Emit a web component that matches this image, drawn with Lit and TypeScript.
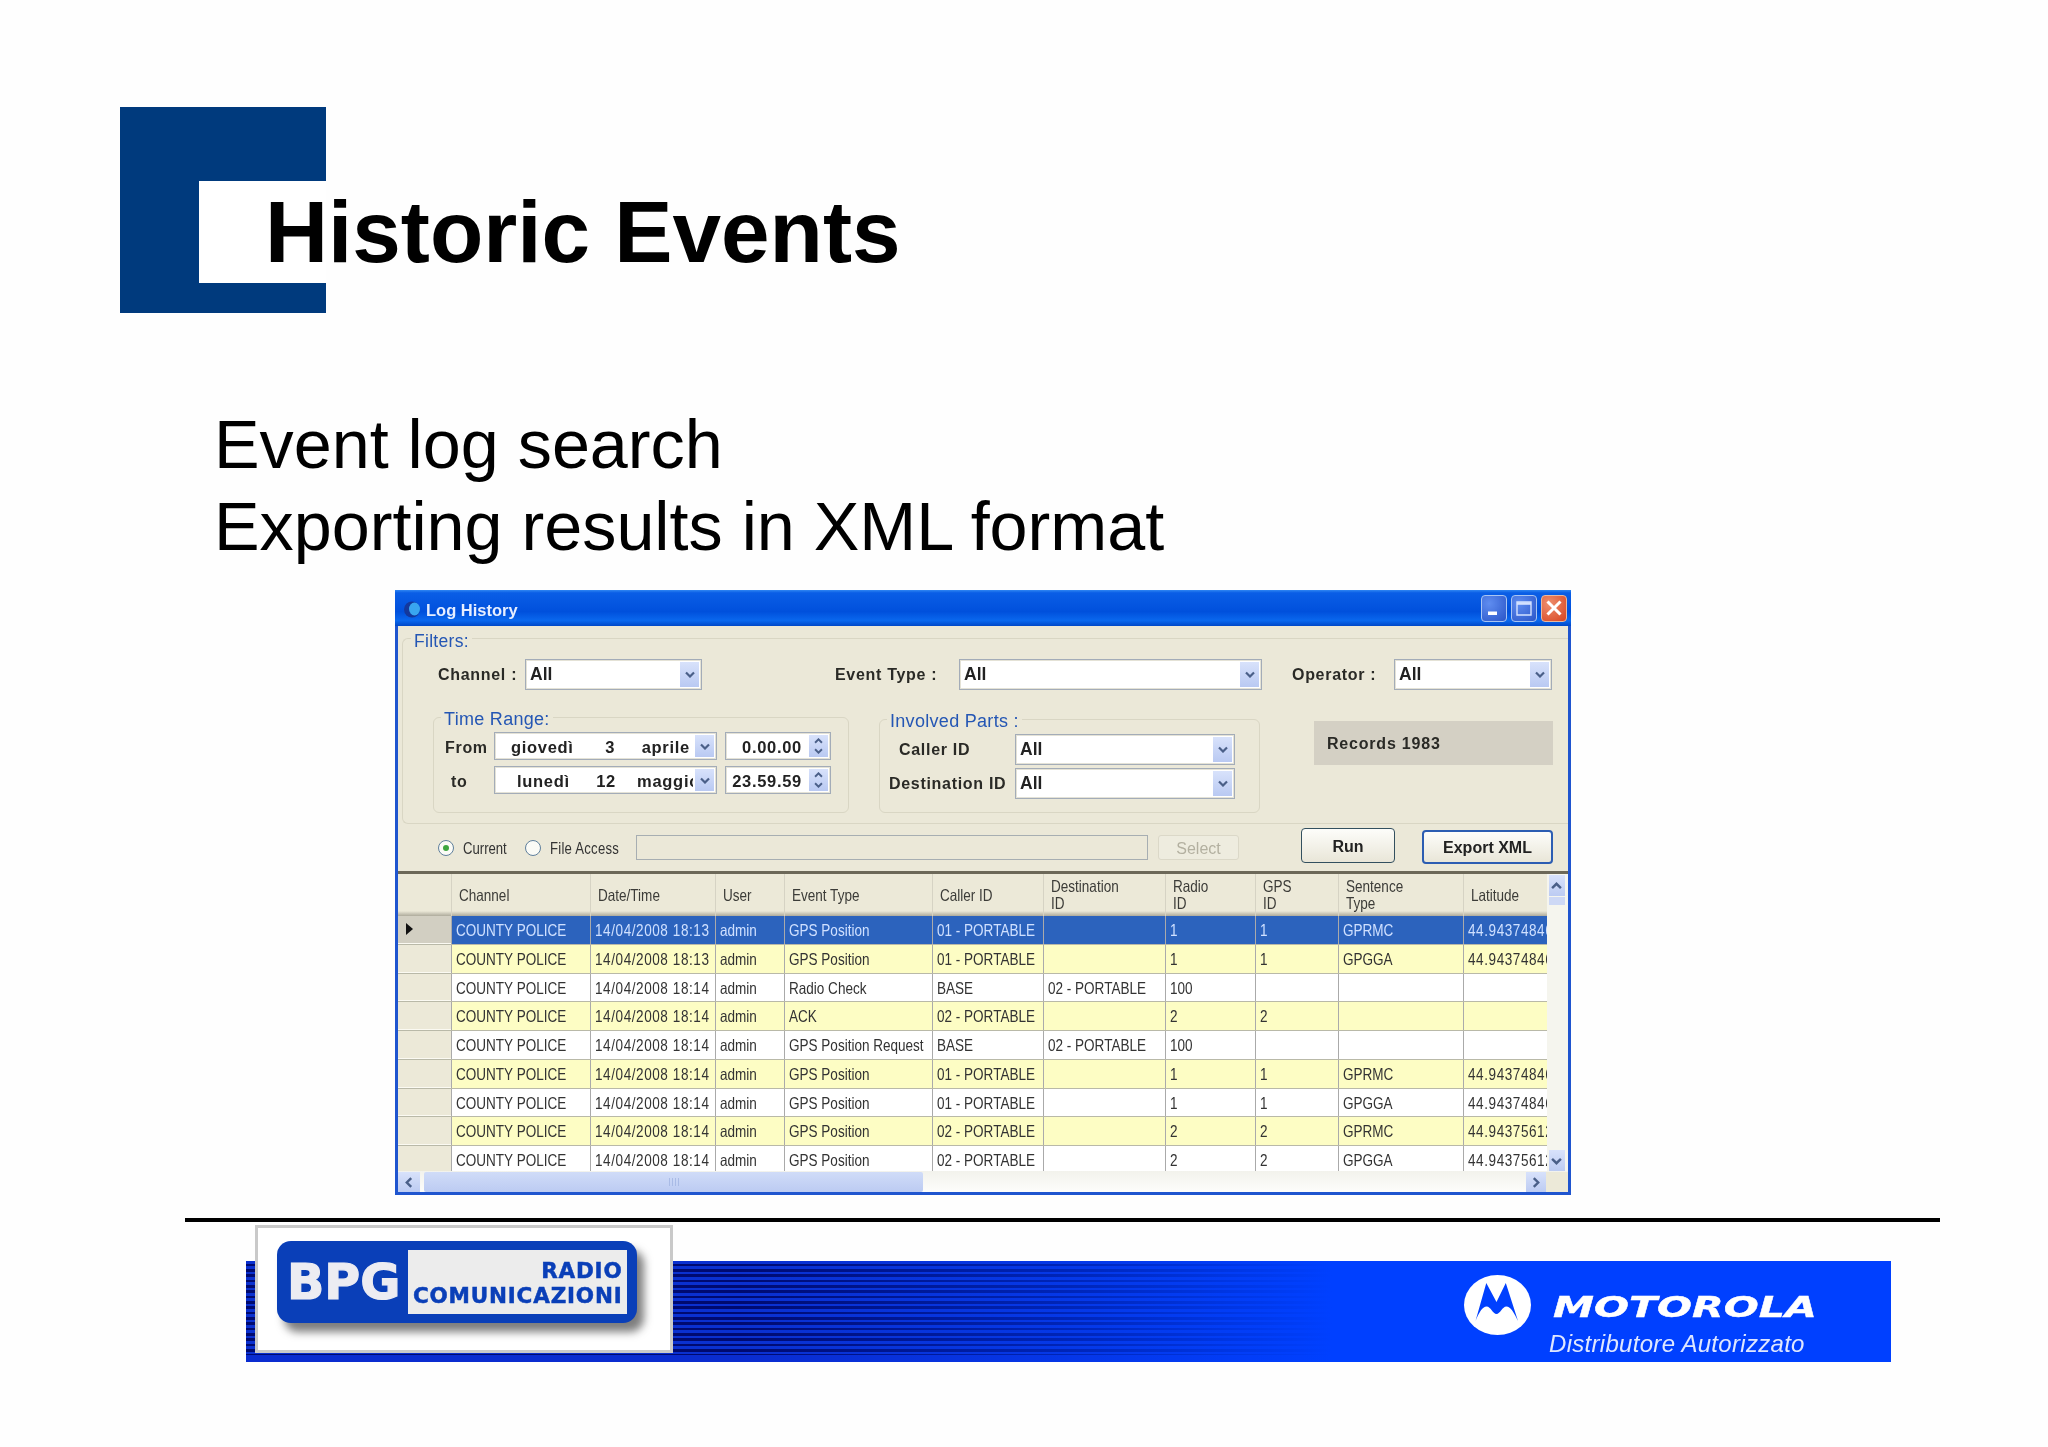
import { LitElement, html, css, svg } from 'lit';
import { customElement } from 'lit/decorators.js';

type Row = { kind: 'sel' | 'yellow' | 'white'; cells: string[] };

const LAT_A = '44.94374846';
const LAT_B = '44.94375612';

const base = (time: string, type: string, caller: string, dest: string, radio: string, gps: string, sentence: string, lat: string) => [
  'COUNTY POLICE', `14/04/2008 ${time}`, 'admin', type, caller, dest, radio, gps, sentence, lat,
];

const ROWS: Row[] = [
  { kind: 'sel', cells: base('18:13', 'GPS Position', '01 - PORTABLE', '', '1', '1', 'GPRMC', LAT_A) },
  { kind: 'yellow', cells: base('18:13', 'GPS Position', '01 - PORTABLE', '', '1', '1', 'GPGGA', LAT_A) },
  { kind: 'white', cells: base('18:14', 'Radio Check', 'BASE', '02 - PORTABLE', '100', '', '', '') },
  { kind: 'yellow', cells: base('18:14', 'ACK', '02 - PORTABLE', '', '2', '2', '', '') },
  { kind: 'white', cells: base('18:14', 'GPS Position Request', 'BASE', '02 - PORTABLE', '100', '', '', '') },
  { kind: 'yellow', cells: base('18:14', 'GPS Position', '01 - PORTABLE', '', '1', '1', 'GPRMC', LAT_A) },
  { kind: 'white', cells: base('18:14', 'GPS Position', '01 - PORTABLE', '', '1', '1', 'GPGGA', LAT_A) },
  { kind: 'yellow', cells: base('18:14', 'GPS Position', '02 - PORTABLE', '', '2', '2', 'GPRMC', LAT_B) },
  { kind: 'white', cells: base('18:14', 'GPS Position', '02 - PORTABLE', '', '2', '2', 'GPGGA', LAT_B) },
];

const HEADERS: string[][] = [
  ['Channel'], ['Date/Time'], ['User'], ['Event Type'], ['Caller ID'],
  ['Destination', 'ID'], ['Radio', 'ID'], ['GPS', 'ID'], ['Sentence', 'Type'], ['Latitude'],
];

// columns with digits run wider than the rest in the reference
const SPACED_COLS = [1, 9];

const chevronDown = svg`<path d="M1 1.5 L5 5.5 L9 1.5" fill="none" stroke="#4a5f88" stroke-width="2.2"/>`;
const chevronUp = svg`<path d="M1 5.5 L5 1.5 L9 5.5" fill="none" stroke="#4a5f88" stroke-width="2.2"/>`;
const chevronLeft = svg`<path d="M5.5 1 L1.5 5 L5.5 9" fill="none" stroke="#4a5f88" stroke-width="2.2"/>`;
const chevronRight = svg`<path d="M1.5 1 L5.5 5 L1.5 9" fill="none" stroke="#4a5f88" stroke-width="2.2"/>`;

@customElement('app-root')
export class AppRoot extends LitElement {
  static styles = css`
    :host {
      display: block;
      width: 2048px;
      height: 1447px;
      padding-top: 107px;
      box-sizing: border-box;
      background: #fefefe;
      overflow: hidden;
      font-family: 'Liberation Sans', Arial, sans-serif;
      color: #000;
    }

    /* slide heading */
    .head {
      display: grid;
      margin-left: 120px;
    }
    .bracket {
      grid-area: 1 / 1;
      width: 206px;
      height: 206px;
      box-sizing: border-box;
      padding: 74px 0 30px 79px;
      background: #003a7d;
    }
    .bracket div {
      height: 100%;
      background: #fff;
    }
    h1 {
      grid-area: 1 / 1;
      z-index: 1;
      margin: 75px 0 0 145px;
      font-size: 87.3px;
      line-height: 100px;
      font-weight: 700;
      white-space: nowrap;
    }
    .lines {
      margin: 90px 0 0 214px;
      font-size: 68.3px;
      line-height: 82px;
    }

    /* log window */
    .window {
      margin: 23px 0 0 395px;
      width: 1176px;
      height: 605px;
      box-sizing: border-box;
      border: solid #1f55cf;
      border-width: 0 3px 3px;
      background: #ebe8d8;
      filter: blur(0.5px);
      display: flex;
      flex-direction: column;
    }
    .titlebar {
      height: 36px;
      margin: 0 -3px;
      padding: 3px 4px 0 9px;
      box-sizing: border-box;
      display: flex;
      align-items: center;
      background: linear-gradient(#2f86f2 0, #0a5ee6 8%, #0050dc 60%, #0a68ee 85%, #0048c8 100%);
      color: #e6eeff;
      font-size: 16.5px;
      line-height: 22px;
      font-weight: 700;
    }
    .titlebar .gem {
      width: 17px;
      height: 17px;
      margin-right: 5px;
    }
    .titlebar .btns {
      margin: -3px 0 0 auto;
      display: flex;
      gap: 4px;
    }
    .wbtn {
      width: 26px;
      height: 27px;
      box-sizing: border-box;
      border: 1.5px solid #a9c5f2;
      border-radius: 4px;
      background: radial-gradient(circle at 30% 30%, #5f8df0, #2a55c8);
      display: flex;
      align-items: center;
      justify-content: center;
    }
    .wbtn.close {
      border-color: #e8b9a0;
      background: radial-gradient(circle at 30% 30%, #ee8f6e, #d8431f);
    }

    .group {
      border: 1px solid #d9d6c4;
      border-radius: 6px;
      box-sizing: border-box;
    }
    .legend {
      width: fit-content;
      height: 22px;
      line-height: 24px;
      margin-top: -11px;
      padding: 0 3px;
      background: #ebe8d8;
      color: #2456b4;
      font-size: 18px;
      letter-spacing: 0.3px;
    }
    .filters {
      margin: 12px 0 0 4px;
      height: 186px;
      border-right: 0;
      border-radius: 6px 0 0 6px;
    }
    .filters > .legend {
      margin-left: 8px;
      line-height: 27px;
      font-size: 17.5px;
    }
    .label {
      font-size: 16px;
      font-weight: 700;
      letter-spacing: 0.7px;
      color: #2a2a26;
      white-space: pre;
    }
    .combo {
      box-sizing: border-box;
      border: 1px solid #a3acb8;
      box-shadow: inset 0 0 0 1px #e4e2d6;
      background: #fff;
      display: flex;
      align-items: center;
      padding-left: 4px;
      height: 31px;
      font-size: 17.5px;
      font-weight: 700;
      color: #222;
      overflow: hidden;
      white-space: pre;
    }
    .combo .val {
      flex: 1;
      min-width: 0;
      overflow: hidden;
    }
    .drop {
      flex: none;
      width: 19px;
      align-self: stretch;
      margin: 2px;
      background: linear-gradient(#d8e2fb, #b9c9f2);
      display: flex;
      align-items: center;
      justify-content: center;
    }
    .drop svg {
      width: 10px;
      height: 7px;
    }

    .top-row {
      display: flex;
      align-items: center;
      padding: 9px 0 0 35px;
    }
    .l-channel { width: 87px; }
    .c-channel { width: 177px; }
    .l-event { width: 124px; margin-left: 133px; }
    .c-event { width: 303px; }
    .l-operator { width: 102px; margin-left: 30px; }
    .c-operator { width: 158px; }

    .mid-row {
      display: flex;
      align-items: flex-start;
      padding: 27px 0 0 30px;
    }
    .time-range {
      width: 416px;
      height: 96px;
      padding-left: 11px;
    }
    .time-range .legend,
    .parts .legend {
      margin-bottom: 3px;
    }
    .time-range .legend {
      margin-left: -4px;
    }
    .parts .legend {
      margin-left: -2px;
      line-height: 25px;
    }
    .time-grid {
      display: grid;
      grid-template-columns: 49px 223px 114px;
      grid-auto-rows: 28px;
      row-gap: 6px;
      align-items: center;
    }
    .time-grid .combo {
      height: 28px;
      font-size: 16.5px;
      letter-spacing: 0.7px;
    }
    .time-grid .val {
      padding-top: 3px;
    }
    .time-grid .label {
      padding-top: 3px;
    }
    .time-grid .label.to {
      padding-left: 6px;
    }
    .date-from { padding-left: 16px; }
    .date-to { padding-left: 22px; }
    .time-field {
      margin-left: 8px;
      width: 106px;
    }
    .time-field .val {
      text-align: right;
    }
    .spin {
      flex: none;
      width: 19px;
      align-self: stretch;
      margin: 2px 2px 2px 7px;
      display: flex;
      flex-direction: column;
      background: linear-gradient(#d8e2fb, #b9c9f2);
      align-items: center;
      justify-content: space-evenly;
    }
    .spin svg {
      width: 9px;
      height: 6px;
    }
    .parts {
      width: 381px;
      height: 94px;
      margin: 2px 0 0 30px;
      padding-left: 9px;
    }
    .parts-grid {
      display: grid;
      grid-template-columns: 126px 220px;
      grid-auto-rows: 31px;
      row-gap: 3px;
      align-items: center;
    }
    .parts-grid .caller {
      padding-left: 10px;
    }
    .records {
      width: 239px;
      height: 44px;
      margin: 4px 0 0 54px;
      padding: 2px 0 0 13px;
      box-sizing: border-box;
      background: #d4d0c4;
      display: flex;
      align-items: center;
    }
    .records .label {
      letter-spacing: 0.8px;
    }

    .bottom-row {
      height: 47px;
      display: flex;
      align-items: flex-start;
      padding-left: 40px;
    }
    .radio {
      flex: none;
      width: 16px;
      height: 16px;
      margin-top: 16px;
      box-sizing: border-box;
      border: 1.5px solid #5f7f9c;
      border-radius: 50%;
      background: #fbfbf6;
      display: flex;
      align-items: center;
      justify-content: center;
    }
    .radio i {
      width: 6px;
      height: 6px;
      border-radius: 50%;
      background: #3ea63e;
    }
    .radio-label {
      flex: none;
      margin: 16px 0 0 9px;
      font-size: 16px;
      line-height: 18px;
      color: #333;
    }
    .narrow {
      display: inline-block;
      transform: scaleX(0.82);
      transform-origin: 0 50%;
      white-space: nowrap;
    }
    .r-current { width: 62px; }
    .r-file { width: 86px; letter-spacing: 0.3px; }
    .path {
      width: 512px;
      height: 25px;
      margin-top: 11px;
      box-sizing: border-box;
      border: 1px solid #a7aeb2;
      background: #ebe8d8;
    }
    .select, .run, .export {
      display: flex;
      align-items: center;
      justify-content: center;
      box-sizing: border-box;
      font-size: 16px;
      white-space: nowrap;
    }
    .select {
      width: 81px;
      height: 25px;
      margin: 11px 0 0 10px;
      padding-top: 2px;
      border: 1px solid #dbd8c8;
      border-radius: 3px;
      background: #eeecdf;
      color: #b3b0a0;
    }
    .run {
      width: 94px;
      height: 35px;
      margin: 4px 0 0 62px;
      padding-top: 2px;
      border: 1.5px solid #33505f;
      border-radius: 4px;
      background: linear-gradient(#fdfdfa, #e9e6d8);
      font-weight: 700;
      color: #222;
    }
    .export {
      width: 131px;
      height: 34px;
      margin: 6px 0 0 27px;
      padding-top: 1px;
      border: 2px solid #2c5db2;
      border-radius: 4px;
      background: linear-gradient(#fdfdfa, #e9e6d8);
      font-weight: 700;
      color: #222;
    }

    /* results grid */
    .table {
      flex: 1;
      border-top: 3px solid #6c6858;
      display: flex;
      flex-direction: column;
      background: #fff;
      min-height: 0;
    }
    .table-main {
      height: 297px;
      display: flex;
    }
    .grid {
      width: 1148.5px;
      overflow: hidden;
      font-size: 16.5px;
      color: #333;
    }
    .row {
      display: grid;
      grid-template-columns: 53px 138.5px 125px 69.5px 148px 111px 122px 90px 82.5px 125.5px 83.5px;
      height: 28.78px;
      box-sizing: border-box;
      border-bottom: 1px solid #b9b9a8;
    }
    .row.header {
      height: 42px;
      border-bottom: 0;
      background: linear-gradient(#ece9d8 88%, #aeab9c 100%);
      color: #3c3c38;
    }
    .row.white { background: #fff; }
    .row.yellow { background: #fdfdc4; }
    .row.sel { background: #2c63bd; color: #cfe0ff; }
    .hcell {
      padding-left: 7px;
      display: flex;
      flex-direction: column;
      justify-content: center;
      line-height: 17px;
      border-left: 1px solid #d6d3c4;
      overflow: hidden;
    }
    .cell {
      padding-left: 4px;
      line-height: 29px;
      border-left: 1px solid #aaa;
      overflow: hidden;
      white-space: nowrap;
    }
    .cell.spaced {
      letter-spacing: 0.7px;
    }
    .stub {
      background: #ece9d8;
      border-bottom: 1px solid #fbfaf2;
      display: flex;
      align-items: center;
      padding-left: 8px;
    }
    .row.sel .stub {
      background: #d2cfc2;
    }
    .row.header .stub {
      background: transparent;
      border: 0;
    }
    .arrow {
      width: 7px;
      height: 12px;
    }
    .vscroll {
      flex: 1;
      padding: 1px 3px 0 2px;
      display: flex;
      flex-direction: column;
      background: #f5f5ee;
    }
    .sb {
      flex: none;
      background: linear-gradient(#d8e2fb, #bccbf2);
      display: flex;
      align-items: center;
      justify-content: center;
    }
    .sb svg {
      width: 11px;
      height: 8px;
    }
    .vscroll .sb { height: 21px; }
    .vscroll .thumb {
      height: 8px;
      background: #cdd8f5;
      margin-top: 1px;
    }
    .vscroll .sb.down {
      margin-top: auto;
    }
    .hscroll {
      flex: 1;
      display: flex;
      align-items: stretch;
      padding-top: 1px;
      background: linear-gradient(#f2f2ec, #fdfdfb);
    }
    .hscroll .sb {
      width: 22px;
    }
    .hscroll .sb svg {
      width: 8px;
      height: 11px;
    }
    .hscroll .thumb {
      width: 499px;
      margin-left: 4px;
      border-radius: 2px;
      background: linear-gradient(#d0dcf8, #bccbf2);
      display: flex;
      align-items: center;
      justify-content: center;
      gap: 2px;
    }
    .hscroll .thumb i {
      width: 1px;
      height: 8px;
      background: #a9bbe6;
    }
    .hscroll .sb.right {
      width: 20px;
      margin-left: 603px;
    }
    .hscroll .corner {
      flex: 1;
      background: #ece9d8;
    }

    /* footer */
    .rule {
      margin: 23px 0 0 185px;
      width: 1755px;
      height: 4px;
      background: #000;
    }
    .banner {
      margin: 39px 0 0 246px;
      width: 1645px;
      height: 101px;
      box-sizing: border-box;
      padding-left: 9px;
      display: flex;
      filter: blur(0.4px);
      background:
        linear-gradient(90deg, rgba(0, 64, 255, 0) 30%, rgba(0, 64, 255, 0.5) 50%, #0040ff 66%),
        linear-gradient(rgba(10, 44, 208, 0) 93%, #0a2cd0 93%),
        repeating-linear-gradient(#0a30d0 0 2.6px, #000a70 2.6px 5.33px);
    }
    .logo {
      flex: none;
      width: 418px;
      height: 128px;
      margin-top: -36px;
      box-sizing: border-box;
      border: 3px solid #c9c9c9;
      background: #fff;
      padding: 13px 0 0 19px;
    }
    .pill {
      width: 360px;
      height: 82px;
      box-sizing: border-box;
      border-radius: 14px;
      background: #0a3fb8;
      box-shadow: 7px 9px 9px rgba(40, 40, 40, 0.6);
      display: flex;
      align-items: center;
      padding: 0 10px;
    }
    .bpg {
      width: 120.5px;
      font-family: 'DejaVu Sans', sans-serif;
      font-weight: 700;
      font-size: 49px;
      color: #ececf2;
      -webkit-text-stroke: 1.2px #ececf2;
    }
    .plate {
      width: 219px;
      height: 64px;
      box-sizing: border-box;
      background: #ececec;
      padding: 8px 4px 0 0;
      text-align: right;
      font-family: 'DejaVu Sans', sans-serif;
      font-weight: 700;
      font-size: 21.5px;
      line-height: 25px;
      letter-spacing: 0.8px;
      color: #0a3fb8;
      -webkit-text-stroke: 0.5px #0a3fb8;
    }
    .moto {
      margin-left: 791px;
      display: flex;
      align-items: flex-start;
      padding-top: 12px;
      color: #fff;
    }
    .batwing {
      width: 67px;
      height: 60px;
      flex: none;
      margin-top: 2px;
    }
    .moto-text {
      margin-left: -1px;
    }
    .moto-name {
      display: block;
      margin: 17px 0 0 23px;
      font-family: 'DejaVu Sans', sans-serif;
      font-weight: 700;
      font-style: italic;
      font-size: 29px;
      line-height: 34px;
      transform: scaleX(1.42);
      transform-origin: 0 50%;
      white-space: nowrap;
      -webkit-text-stroke: 0.4px #fff;
    }
    .moto-sub {
      margin: 7px 0 0 19px;
      font-style: italic;
      font-size: 24px;
      line-height: 26px;
      letter-spacing: 0.3px;
      color: #dfe7ff;
      white-space: nowrap;
    }
  `;

  private combo(cls: string, text: string) {
    return html`<div class="combo ${cls}"><span class="val">${text}</span><span class="drop"><svg viewBox="0 0 10 7">${chevronDown}</svg></span></div>`;
  }

  private timeField(text: string) {
    return html`<div class="combo time-field"><span class="val">${text}</span><span class="spin"><svg viewBox="0 0 10 7">${chevronUp}</svg><svg viewBox="0 0 10 7">${chevronDown}</svg></span></div>`;
  }

  private renderGrid() {
    return html`
      <div class="grid">
        <div class="row header">
          <div class="stub"></div>
          ${HEADERS.map(
            (lines) => html`<div class="hcell">${lines.map((l) => html`<div><span class="narrow">${l}</span></div>`)}</div>`
          )}
        </div>
        ${ROWS.map(
          (row) => html`
            <div class="row ${row.kind}">
              <div class="stub">
                ${row.kind === 'sel'
                  ? html`<svg class="arrow" viewBox="0 0 7 12"><path d="M0 0 L7 6 L0 12Z" fill="#111"/></svg>`
                  : ''}
              </div>
              ${row.cells.map(
                (c, i) => html`<div class="cell ${SPACED_COLS.includes(i) ? 'spaced' : ''}"><span class="narrow">${c}</span></div>`
              )}
            </div>
          `
        )}
      </div>
    `;
  }

  render() {
    return html`
      <div class="head">
        <div class="bracket"><div></div></div>
        <h1>Historic Events</h1>
      </div>
      <div class="lines">
        <div>Event log search</div>
        <div>Exporting results in XML format</div>
      </div>

      <div class="window">
        <div class="titlebar">
          <svg class="gem" viewBox="0 0 17 17">
            <circle cx="8" cy="8.5" r="8" fill="#14389c"/>
            <ellipse cx="10.5" cy="8" rx="5.5" ry="6.5" fill="#39a6f0"/>
          </svg>
          <span>Log History</span>
          <div class="btns">
            <div class="wbtn">
              <svg width="18" height="18" viewBox="0 0 18 18"><rect x="3" y="12.5" width="9" height="3.5" fill="#fff"/></svg>
            </div>
            <div class="wbtn">
              <svg width="18" height="18" viewBox="0 0 18 18"><path d="M2 3 H16 V16 H2Z" fill="none" stroke="#d4e2ff" stroke-width="1.4"/><path d="M2 4.5 H16" stroke="#d4e2ff" stroke-width="2.6"/></svg>
            </div>
            <div class="wbtn close">
              <svg width="18" height="18" viewBox="0 0 18 18"><path d="M2.5 2.5 L15.5 15.5 M15.5 2.5 L2.5 15.5" stroke="#fff" stroke-width="3"/></svg>
            </div>
          </div>
        </div>

        <div class="group filters">
          <div class="legend">Filters:</div>
          <div class="top-row">
            <span class="label l-channel">Channel :</span>
            ${this.combo('c-channel', 'All')}
            <span class="label l-event">Event Type :</span>
            ${this.combo('c-event', 'All')}
            <span class="label l-operator">Operator :</span>
            ${this.combo('c-operator', 'All')}
          </div>
          <div class="mid-row">
            <div class="group time-range">
              <div class="legend">Time Range:</div>
              <div class="time-grid">
                <span class="label">From</span>
                ${this.combo('date-from', 'giovedì      3     aprile')}
                ${this.timeField('0.00.00')}
                <span class="label to">to</span>
                ${this.combo('date-to', 'lunedì     12    maggio')}
                ${this.timeField('23.59.59')}
              </div>
            </div>
            <div class="group parts">
              <div class="legend">Involved Parts :</div>
              <div class="parts-grid">
                <span class="label caller">Caller ID</span>
                ${this.combo('', 'All')}
                <span class="label">Destination ID</span>
                ${this.combo('', 'All')}
              </div>
            </div>
            <div class="records"><span class="label">Records 1983</span></div>
          </div>
        </div>

        <div class="bottom-row">
          <span class="radio"><i></i></span>
          <span class="radio-label r-current"><span class="narrow">Current</span></span>
          <span class="radio"></span>
          <span class="radio-label r-file"><span class="narrow">File Access</span></span>
          <div class="path"></div>
          <div class="select"><span>Select</span></div>
          <div class="run">Run</div>
          <div class="export">Export XML</div>
        </div>

        <div class="table">
          <div class="table-main">
            ${this.renderGrid()}
            <div class="vscroll">
              <div class="sb"><svg viewBox="0 0 10 7">${chevronUp}</svg></div>
              <div class="thumb"></div>
              <div class="sb down"><svg viewBox="0 0 10 7">${chevronDown}</svg></div>
            </div>
          </div>
          <div class="hscroll">
            <div class="sb"><svg viewBox="0 0 7 10">${chevronLeft}</svg></div>
            <div class="thumb"><i></i><i></i><i></i><i></i></div>
            <div class="sb right"><svg viewBox="0 0 7 10">${chevronRight}</svg></div>
            <div class="corner"></div>
          </div>
        </div>
      </div>

      <div class="rule"></div>
      <div class="banner">
        <div class="logo">
          <div class="pill">
            <div class="bpg">BPG</div>
            <div class="plate">RADIO<br />COMUNICAZIONI</div>
          </div>
        </div>
        <div class="moto">
          <svg class="batwing" viewBox="0 0 67 60">
            <ellipse cx="33.5" cy="30" rx="33.5" ry="30" fill="#fff"/>
            <path d="M11.5 46 L22.3 8 L32.5 27 L41.8 8 L54 46 C50 38 47 31.5 42.3 31.5 C38.5 31.5 36 39 32.5 39 C29 39 26.5 31.5 22.7 31.5 C18 31.5 15 38 11.5 46Z" fill="#0040ff"/>
          </svg>
          <div class="moto-text">
            <span class="moto-name">MOTOROLA</span>
            <div class="moto-sub">Distributore Autorizzato</div>
          </div>
        </div>
      </div>
    `;
  }
}

declare global {
  interface HTMLElementTagNameMap {
    'app-root': AppRoot;
  }
}
